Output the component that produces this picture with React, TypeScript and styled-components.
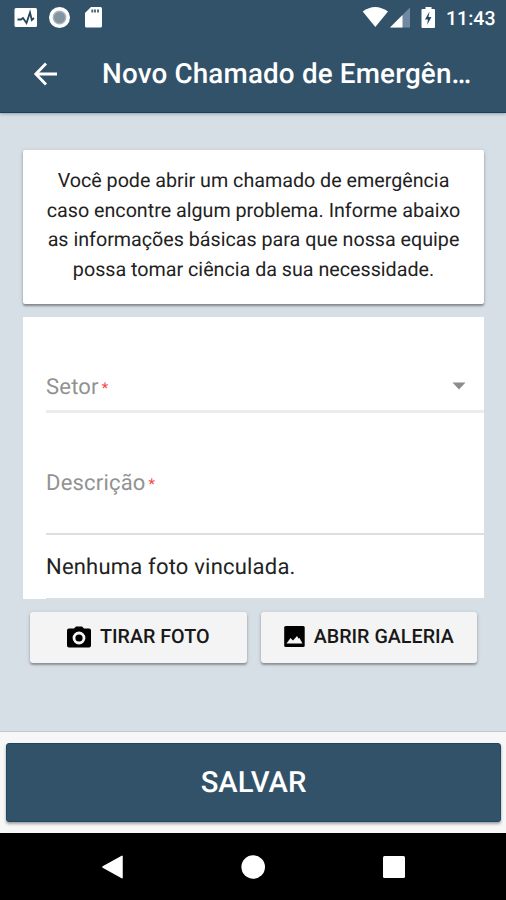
import React from "react";
import styled, { createGlobalStyle } from "styled-components";

const GlobalStyle = createGlobalStyle`
  * { box-sizing: border-box; }
  body { margin: 0; font-family: Roboto, "Liberation Sans", sans-serif; text-rendering: geometricPrecision; }
  button { font-family: inherit; border: 0; padding: 0; text-rendering: inherit; }
`;

const Screen = styled.div`
  width: 506px;
  height: 900px;
  display: flex;
  flex-direction: column;
  overflow: hidden;
  background: #d7dfe6;
`;

const Header = styled.header`
  height: 113px;
  flex: none;
  background: #32526a;
  color: #fff;
  border-bottom: 1px solid #173f5b;
  box-shadow: 0 1px 3px rgba(40, 60, 80, 0.4);
`;

const StatusBar = styled.div`
  height: 36px;
  display: flex;
  justify-content: space-between;
`;

const StatusGroup = styled.div`
  display: flex;
  align-items: flex-start;
`;

const Clock = styled.span`
  width: 60px;
  font-size: 19.5px;
  line-height: 24px;
  padding-top: 7px;
  font-weight: 500;
`;

const TitleBar = styled.div`
  height: 76px;
  display: flex;
  align-items: center;
`;

const BackButton = styled.button`
  width: 102px;
  height: 76px;
  padding-left: 33px;
  display: flex;
  align-items: center;
  background: none;
  color: #fff;
`;

const Title = styled.h1`
  margin: 0;
  font-size: 27.8px;
  font-weight: 500;
  line-height: 40px;
  white-space: nowrap;
  letter-spacing: 0.17px;
`;

const Content = styled.main`
  flex: 1;
  padding: 37px 22px 0 23px;
`;

const Intro = styled.section`
  height: 154px;
  padding-top: 16px;
  background: #fff;
  border-radius: 2px;
  text-align: center;
  font-size: 19.7px;
  line-height: 29.6px;
  color: #222;
  box-shadow: 0 2px 2px rgba(0, 0, 0, 0.32), 0 1px 4px rgba(0, 0, 0, 0.15);
`;

const IntroLine = styled.div`
  white-space: nowrap;
`;

const Form = styled.section`
  margin-top: 13px;
  height: 282px;
  padding-left: 23px;
  background: #fff;
`;

const Field = styled.div<{ $height: number; $line: string; $thick: number }>`
  height: ${(p) => p.$height}px;
  padding: 57px 18px 0 0;
  display: flex;
  align-items: flex-start;
  justify-content: space-between;
  border-bottom: ${(p) => p.$thick}px solid ${(p) => p.$line};
`;

const Label = styled.span`
  display: flex;
  align-items: flex-start;
  font-size: 22px;
  line-height: 28px;
  letter-spacing: 0.2px;
  color: #929292;
`;

const Required = styled.span`
  margin-left: 3px;
  font-size: 15px;
  letter-spacing: 0;
  line-height: 28px;
  color: #f44b4b;
`;

const Caret = styled.svg`
  margin-top: 8px;
`;

const EmptyNote = styled.div`
  height: 64px;
  padding-top: 18px;
  font-size: 22px;
  line-height: 30px;
  letter-spacing: 0.2px;
  color: #222;
  border-bottom: 1px solid #dedede;
`;

const Actions = styled.div`
  margin: 13px 7px 0;
  display: flex;
  gap: 14px;
`;

const PhotoButton = styled.button`
  flex: 1;
  height: 51px;
  padding-bottom: 2px;
  display: flex;
  align-items: center;
  justify-content: center;
  gap: 9px;
  background: #f4f4f4;
  border-radius: 3px;
  font-size: 19.7px;
  font-weight: 500;
  white-space: nowrap;
  color: #181818;
  box-shadow: 0 2px 2px rgba(0, 0, 0, 0.28), 0 1px 4px rgba(0, 0, 0, 0.15);
`;

const Footer = styled.footer`
  height: 102px;
  flex: none;
  padding: 11px 5px 0 6px;
  background: #f7f7f7;
  border-top: 1px solid #bdc8d2;
`;

const SaveButton = styled.button`
  width: 100%;
  height: 79px;
  display: flex;
  align-items: center;
  justify-content: center;
  background: #32526a;
  border: 1px solid #1f4660;
  border-radius: 3px;
  color: #fff;
  font-size: 29.2px;
  font-weight: 500;
  box-shadow: 0 2px 3px rgba(0, 0, 0, 0.35);
`;

const NavBar = styled.nav`
  height: 67px;
  flex: none;
  background: #000;
  display: grid;
  grid-template-columns: repeat(3, 141px);
  justify-content: center;
  justify-items: center;
  align-items: center;
`;

const introLines = [
  "Você pode abrir um chamado de emergência",
  "caso encontre algum problema. Informe abaixo",
  "as informações básicas para que nossa equipe",
  "possa tomar ciência da sua necessidade.",
];

export default function App() {
  return (
    <Screen>
      <GlobalStyle />
      <Header>
        <StatusBar>
          <StatusGroup>
            <svg width="110" height="36" viewBox="0 0 110 36">
              <rect x="14.500" y="8" width="22.500" height="19" rx="1.500" fill="#fff" />
              <path d="M17.500 19.500H21L23 18L26.500 23L30 12.500L31.800 20L34 18" fill="none" stroke="#24465f" strokeWidth="1.800" />
              <circle cx="59.500" cy="17.500" r="10.500" fill="#fff" />
              <circle cx="59.500" cy="17.500" r="6.200" fill="#8495a2" stroke="#a9b5be" strokeWidth="1.400" />
              <path d="M91 7h9.500q1.500 0 1.500 1.500v17.500q0 1.500-1.500 1.500h-14q-1.500 0-1.500-1.500V13z" fill="#fff" />
              <path d="M92.300 9.500v3M95 9.500v3M98 9.500v3" stroke="#4d687c" strokeWidth="1.900" />
            </svg>
          </StatusGroup>
          <StatusGroup>
            <svg width="85" height="36" viewBox="361 0 85 36">
              <path d="M362.700 11.500Q375 2.500 388 11.500L375.300 27z" fill="#fff" />
              <path d="M410 7.500V27.500H390z" fill="#7189a0" />
              <path d="M402.500 15V27.500H390z" fill="#fff" />
              <path d="M425.500 7h6v2h2.500q1 0 1 1v17q0 1-1 1h-11.500q-1 0-1-1V10q0-1 1-1h3z" fill="#fff" />
              <path d="M429.500 11.500l-4.500 8h3l-1 5.500 4.500-8h-3z" fill="#24465f" />
            </svg>
            <Clock>11:43</Clock>
          </StatusGroup>
        </StatusBar>
        <TitleBar>
          <BackButton aria-label="Voltar">
            <svg width="26" height="26" viewBox="0 0 26 26" fill="none" stroke="#fff" strokeWidth="2.800">
              <path d="M24 13H4M13 2.500L2.800 13L13 23.500" />
            </svg>
          </BackButton>
          <Title>Novo Chamado de Emergên…</Title>
        </TitleBar>
      </Header>
      <Content>
        <Intro>
          {introLines.map((line) => (
            <IntroLine key={line}>{line}</IntroLine>
          ))}
        </Intro>
        <Form>
          <Field $height={96} $line="#ececec" $thick={3}>
            <Label>Setor<Required>*</Required></Label>
            <Caret width="14" height="8" viewBox="0 0 14 8">
              <path d="M0.500 0.500h13L7 7.500z" fill="#8c8c8c" />
            </Caret>
          </Field>
          <Field $height={122} $line="#dedede" $thick={2}>
            <Label>Descrição<Required>*</Required></Label>
          </Field>
          <EmptyNote>Nenhuma foto vinculada.</EmptyNote>
        </Form>
        <Actions>
          <PhotoButton>
            <svg width="24" height="22" viewBox="0 0 24 22">
              <path d="M2 2.500h5L9 .5h6l2 2h5q2 0 2 2V19.500q0 2-2 2H2q-2 0-2-2V4.500q0-2 2-2z" fill="#000" />
              <circle cx="12" cy="12" r="5" fill="#000" stroke="#f4f4f4" strokeWidth="2.800" />
            </svg>
            TIRAR FOTO
          </PhotoButton>
          <PhotoButton>
            <svg width="21" height="21" viewBox="0 0 21 21">
              <rect width="20.500" height="21" x=".2" rx="1.500" fill="#000" />
              <path d="M2.500 17.500L6.500 12l2.500 2.500L13 10l1.500 2.500 1-.5 3 5.500z" fill="#f4f4f4" />
            </svg>
            ABRIR GALERIA
          </PhotoButton>
        </Actions>
      </Content>
      <Footer>
        <SaveButton>SALVAR</SaveButton>
      </Footer>
      <NavBar>
        <svg width="22" height="24" viewBox="0 0 22 24">
          <path d="M2 12L21 1.300v21.400z" fill="#fff" stroke="#fff" strokeWidth="1.500" strokeLinejoin="round" />
        </svg>
        <svg width="24" height="24" viewBox="0 0 24 24"><circle cx="12.200" cy="12" r="11.800" fill="#fff" /></svg>
        <svg width="22" height="22" viewBox="0 0 22 22"><rect width="22" height="22" rx="1.500" fill="#fff" /></svg>
      </NavBar>
    </Screen>
  );
}
